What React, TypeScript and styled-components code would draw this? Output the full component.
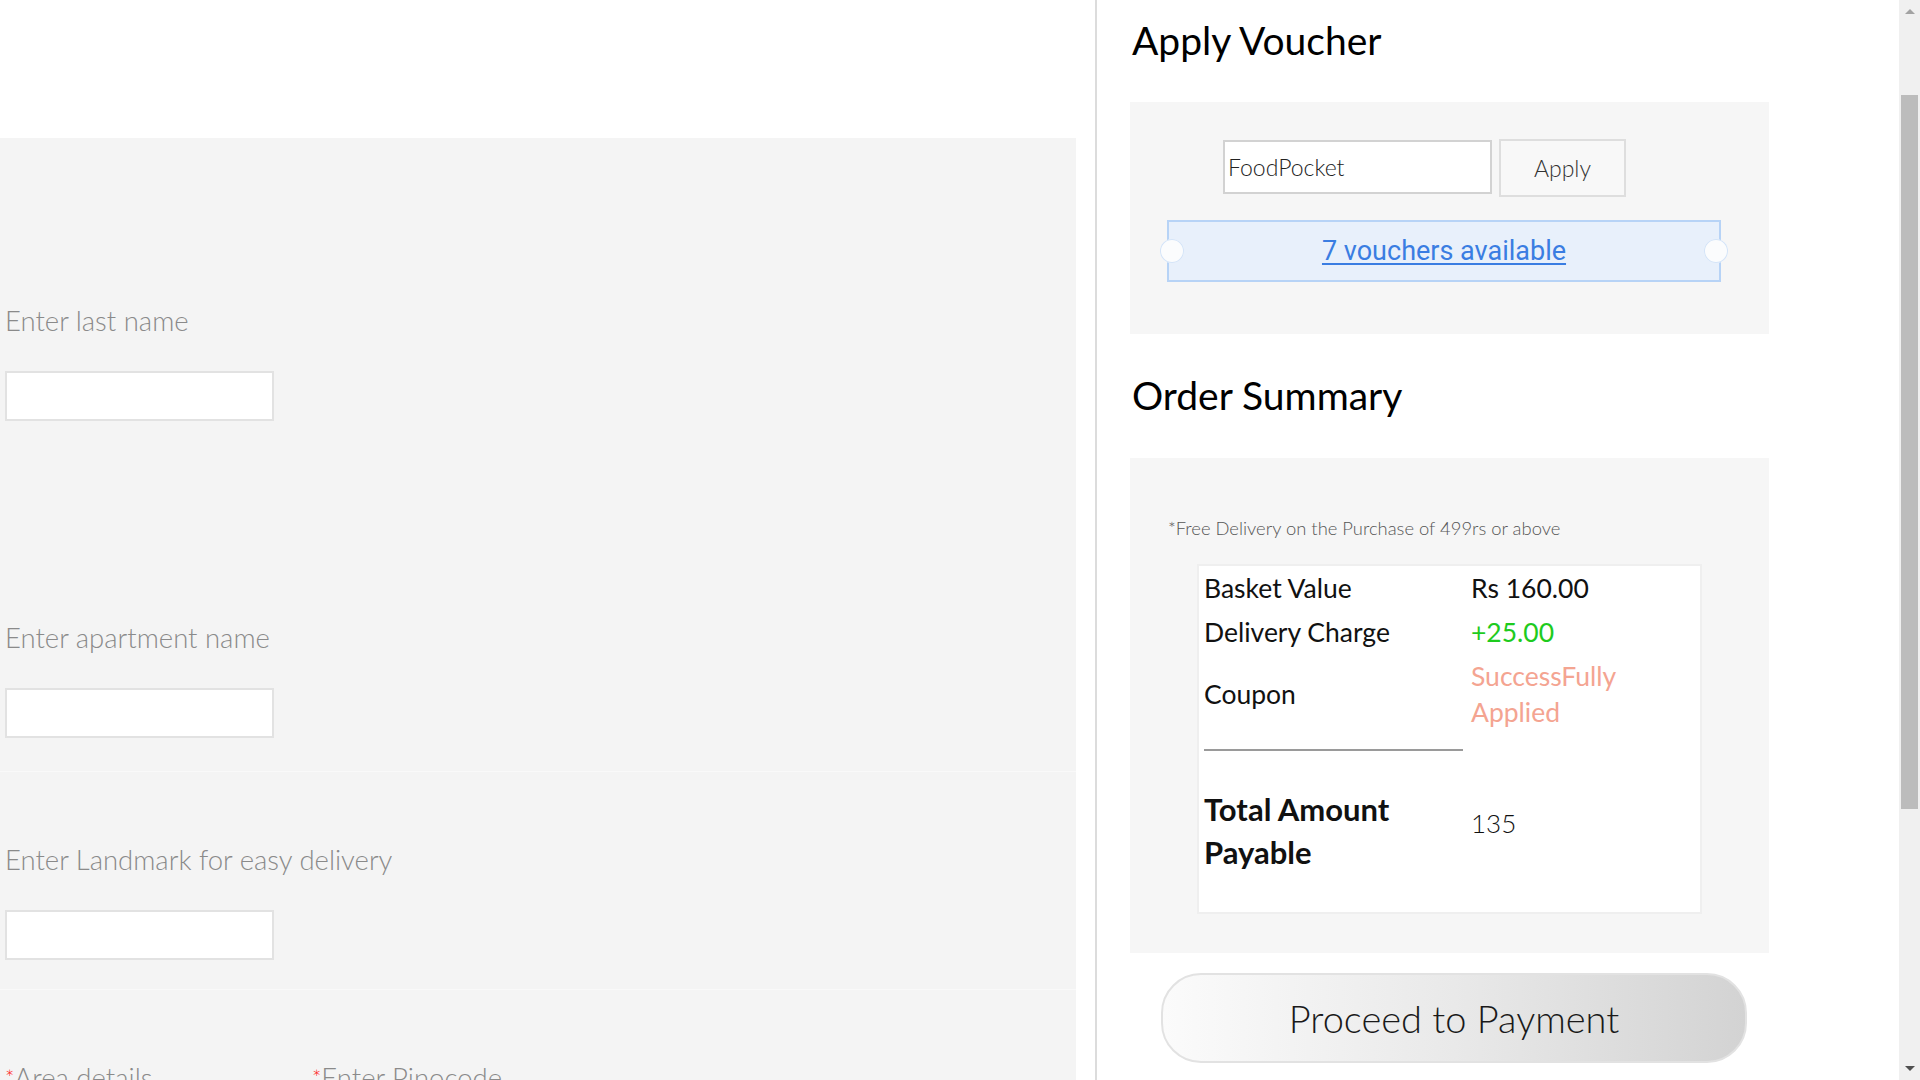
import React, { useLayoutEffect } from "react";
import styled, { createGlobalStyle } from "styled-components";

const SCROLL = 118;

const GlobalStyle = createGlobalStyle`
  html, body { margin: 0; padding: 0; background: #ffffff; }
  body { font-family: Lato, "Open Sans", sans-serif; color: #222; }
  * { box-sizing: border-box; }
`;

const Page = styled.div`
  display: flex;
  align-items: stretch;
  min-height: 1582px;
`;

/* ---------- window scrollbar (drawn, the screenshot hides the native one) ---------- */

const ScrollRail = styled.div`
  position: fixed;
  top: 0;
  right: 0;
  width: 21px;
  height: 100vh;
  background: #f0f0f0;
  display: flex;
  flex-direction: column;
  pointer-events: none;
`;

const RailArrow = styled.div<{ $down?: boolean }>`
  flex: none;
  height: 17px;
  display: flex;
  justify-content: center;
  align-items: ${(p) => (p.$down ? "flex-start" : "flex-end")};
  padding: ${(p) => (p.$down ? "3px 0 0" : "0 0 3px")};

  &::before {
    content: "";
    width: 0;
    height: 0;
    border-left: 5px solid transparent;
    border-right: 5px solid transparent;
    ${(p) =>
      p.$down
        ? "border-top: 5px solid #505050;"
        : "border-bottom: 5px solid #a3a3a3;"}
  }
`;

const RailTrack = styled.div`
  flex: 1;
  padding: 78px 2px 0;
`;

const RailThumb = styled.div`
  height: 714px;
  background: #bcbcbc;
`;

/* ---------- left: address form ---------- */

const FormColumn = styled.div`
  flex: none;
  width: 1095px;
  padding: ${138 + SCROLL}px 19px 0 0;
  display: flex;
  flex-direction: column;
`;

const FormPanel = styled.div`
  flex: 1;
  background: #f4f4f4;
`;

const Section = styled.div<{ $top: number; $gap?: number; $bottom?: number; $divided?: boolean }>`
  display: flex;
  flex-direction: column;
  gap: ${(p) => p.$gap ?? 0}px;
  padding: ${(p) => p.$top}px 0 ${(p) => p.$bottom ?? 29}px 5px;
  border-top: ${(p) => (p.$divided ? "1px solid #f9f9f9" : "none")};
`;

const FieldRow = styled.div`
  display: flex;
  gap: 38px;
`;

const Field = styled.label`
  display: flex;
  flex-direction: column;
  gap: 33px;
  width: 269px;
`;

const FieldLabel = styled.span`
  font-size: 27.5px;
  line-height: 34px;
  font-weight: 300;
  color: #8a8a8a;
  white-space: nowrap;
`;

const Required = styled.span`
  color: #ff1a1a;
  font-size: 22px;
  vertical-align: top;
`;

const TextInput = styled.input`
  width: 269px;
  height: 50px;
  border: 2px solid #e2e2e2;
  background: #ffffff;
  outline: none;
  font-family: inherit;
  font-size: 20px;
  padding: 0 6px;
`;

/* ---------- right: voucher + summary ---------- */

const SideColumn = styled.aside`
  flex: 1;
  border-left: 2px solid #dcdcdc;
  padding: ${SCROLL + 17}px 0 0 33px;
  display: flex;
  flex-direction: column;
  align-items: flex-start;
`;

const Heading = styled.h2<{ $top?: number }>`
  margin: ${(p) => p.$top ?? 0}px 0 0 0;
  padding-left: 2px;
  font-size: 39px;
  line-height: 46px;
  font-weight: 400;
  color: #000;
`;

const VoucherPanel = styled.div`
  margin-top: 39px;
  width: 639px;
  background: #f6f6f6;
  padding: 37px 0 52px 0;
  display: flex;
  flex-direction: column;
`;

const CodeRow = styled.div`
  display: flex;
  align-items: flex-start;
  gap: 7px;
  margin-left: 93px;
`;

const CodeInput = styled.input`
  margin-top: 1px;
  width: 269px;
  height: 54px;
  border: 2px solid #d2d2d2;
  background: #fff;
  padding: 0 3px;
  font-family: inherit;
  font-size: 23px;
  font-weight: 300;
  color: #222;
  outline: none;
`;

const ApplyButton = styled.button`
  width: 127px;
  height: 58px;
  border: 2px solid #dedede;
  background: #f8f8f8;
  font-family: inherit;
  font-size: 23px;
  font-weight: 300;
  color: #333;
  cursor: pointer;
`;

const Ticket = styled.div`
  position: relative;
  margin: 23px 0 0 37px;
  width: 554px;
  height: 62px;
  background: #e8f0fb;
  border: 2px solid #b7d3f6;
  display: flex;
  align-items: center;
  justify-content: center;

  &::before,
  &::after {
    content: "";
    position: absolute;
    top: 17px;
    width: 24px;
    height: 24px;
    border-radius: 50%;
    background: #fbfcfd;
    box-shadow: inset 0 0 0 1px #d4e4f8;
  }
  &::before { left: -9px; }
  &::after { right: -9px; }
`;

const VoucherLink = styled.a`
  font-family: Roboto, "Open Sans", sans-serif;
  font-size: 27px;
  color: #3a7de2;
  text-decoration: underline;
  text-underline-offset: 3px;
  cursor: pointer;
`;

const SummaryPanel = styled.div`
  margin-top: 40px;
  width: 639px;
  background: #f6f6f6;
  padding: 58px 0 39px 0;
  display: flex;
  flex-direction: column;
`;

const Note = styled.p`
  margin: 0 0 0 38px;
  font-size: 18.4px;
  line-height: 24px;
  font-weight: 300;
  color: #555;
`;

const SummaryBox = styled.div`
  margin: 24px 0 0 67px;
  width: 505px;
  height: 350px;
  background: #fff;
  border: 2px solid #efefef;
  display: grid;
  grid-template-columns: 267px 1fr;
  align-content: start;
`;

const Cell = styled.div<{ $tone?: "plain" | "green" | "salmon"; $strong?: boolean }>`
  padding: 4px 3px 4px 5px;
  font-size: ${(p) => (p.$strong ? 31 : 26.5)}px;
  line-height: ${(p) => (p.$strong ? 43 : 36)}px;
  font-weight: ${(p) => (p.$strong ? 700 : 400)};
  color: ${(p) => (p.$tone === "green" ? "#1ecb1e" : p.$tone === "salmon" ? "#f4a491" : "#111")};
  display: flex;
  align-items: center;
`;

const ValueCell = styled(Cell)`
  padding-left: 5px;
  font-weight: 400;
`;

const RuleCell = styled.div`
  padding: 15px 3px 33px 5px;
`;

const Rule = styled.hr`
  margin: 0;
  border: none;
  height: 2px;
  background: #9a9a9a;
`;

const TotalValue = styled(ValueCell)`
  padding-bottom: 20px;
  font-size: 26px;
  font-weight: 300;
`;

const PayButton = styled.button`
  margin: 20px 0 0 31px;
  width: 586px;
  height: 90px;
  border-radius: 40px;
  border: 2px solid #e2e2e2;
  background: linear-gradient(90deg, #fbfbfb 0%, #e9e9e9 50%, #d3d3d3 100%);
  font-family: inherit;
  font-size: 38px;
  font-weight: 300;
  color: #1a1a1a;
  cursor: pointer;
`;

export default function App() {
  useLayoutEffect(() => {
    window.scrollTo(0, SCROLL);
  }, []);

  return (
    <>
      <GlobalStyle />
      <Page>
        <FormColumn>
          <FormPanel>
            <Section $top={166} $gap={200} $bottom={33}>
              <Field>
                <FieldLabel>Enter last name</FieldLabel>
                <TextInput type="text" />
              </Field>
              <Field>
                <FieldLabel>Enter apartment name</FieldLabel>
                <TextInput type="text" />
              </Field>
            </Section>
            <Section $top={71} $divided>
              <Field>
                <FieldLabel>Enter Landmark for easy delivery</FieldLabel>
                <TextInput type="text" />
              </Field>
            </Section>
            <Section $top={71} $divided>
              <FieldRow>
                <Field>
                  <FieldLabel>
                    <Required>*</Required>Area details
                  </FieldLabel>
                  <TextInput type="text" />
                </Field>
                <Field>
                  <FieldLabel>
                    <Required>*</Required>Enter Pinocode
                  </FieldLabel>
                  <TextInput type="text" />
                </Field>
              </FieldRow>
            </Section>
          </FormPanel>
        </FormColumn>

        <SideColumn>
          <Heading>Apply Voucher</Heading>
          <VoucherPanel>
            <CodeRow>
              <CodeInput type="text" defaultValue="FoodPocket" />
              <ApplyButton type="button">Apply</ApplyButton>
            </CodeRow>
            <Ticket>
              <VoucherLink>7 vouchers available</VoucherLink>
            </Ticket>
          </VoucherPanel>

          <Heading $top={38}>Order Summary</Heading>
          <SummaryPanel>
            <Note>*Free Delivery on the Purchase of 499rs or above</Note>
            <SummaryBox>
              <Cell>Basket Value</Cell>
              <ValueCell>Rs 160.00</ValueCell>
              <Cell>Delivery Charge</Cell>
              <ValueCell $tone="green">+25.00</ValueCell>
              <Cell>Coupon</Cell>
              <ValueCell $tone="salmon">
                SuccessFully
                <br />
                Applied
              </ValueCell>
              <RuleCell>
                <Rule />
              </RuleCell>
              <div />
              <Cell $strong>
                Total Amount
                <br />
                Payable
              </Cell>
              <TotalValue>135</TotalValue>
            </SummaryBox>
          </SummaryPanel>
          <PayButton type="button">Proceed to Payment</PayButton>
        </SideColumn>
      </Page>

      <ScrollRail aria-hidden="true">
        <RailArrow />
        <RailTrack>
          <RailThumb />
        </RailTrack>
        <RailArrow $down />
      </ScrollRail>
    </>
  );
}
